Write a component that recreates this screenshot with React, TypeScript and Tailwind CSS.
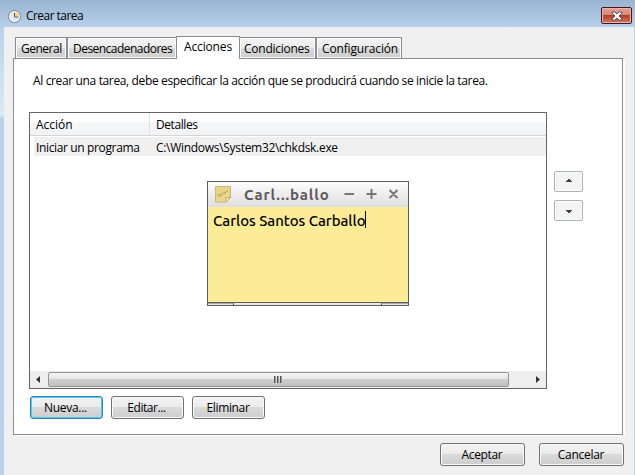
import React from "react";

const face = "bg-[linear-gradient(#f3f3f3_0%,#ebebeb_48%,#dadada_50%,#cdcdcd_100%)]";

function T({ children, w }: { children: React.ReactNode; w: string }) {
  return <span className={"block shrink-0 whitespace-pre " + w}>{children}</span>;
}

function Button({ children, size, track, focus = false }: { children: string; size: string; track: string; focus?: boolean }) {
  return (
    <button
      className={
        "flex h-[23px] items-center justify-center rounded-[3px] border " + face + " " + size + " " +
        (focus
          ? "border-[#3c7fb1] shadow-[inset_0_0_0_1px_#48cdf5]"
          : "border-[#707070] shadow-[inset_0_0_0_1px_#fafafa]")
      }
    >
      <span className={"block whitespace-pre " + track}>{children}</span>
    </button>
  );
}

function Tab({ children, cls, track }: { children: string; cls: string; track: string }) {
  return (
    <div className={"h-[21px] border border-b-0 border-[#898c95] pl-[5px] leading-[21px] shadow-[inset_0_0_0_1px_#fcfcfc] " + face + " " + cls}>
      <T w={track}>{children}</T>
    </div>
  );
}

function ArrowButton({ up }: { up: boolean }) {
  return (
    <div className="flex h-[21px] w-[29px] items-center justify-center rounded-[2px] border border-[#adb2b5] bg-[#f4f4f4] shadow-[inset_0_0_0_1px_#fcfcfc]">
      <svg width="6" height="3" viewBox="0 0 6 3" shapeRendering="crispEdges" className={up ? "mb-[2px]" : "mt-[2px]"}>
        <path d={up ? "M2 0h2v1h1v1h1v1H0V2h1V1h1z" : "M0 0h6v1H5v1H4v1H2V2H1V1H0z"} fill="#404040" />
      </svg>
    </div>
  );
}

function StickyNote() {
  return (
    <div className="absolute left-[207px] top-[181px] flex h-[125px] w-[202px] flex-col border border-[#5c5c5c] bg-[#fdec97]">
      <div className="flex h-[25px] shrink-0 items-center bg-[linear-gradient(#fdfdfd,#dedede)] font-['Ubuntu','Noto_Sans',sans-serif]">
        <svg className="ml-[7px] shrink-0" width="17" height="17" viewBox="0 0 17 17">
          <path d="M.5 .5h15v11l-4.500 4.500H.5z" fill="#e9d68a" stroke="#cdb873" />
          <path d="M11 16v-4.500h4.500z" fill="#f8edb4" stroke="#b9a35c" strokeWidth=".8" />
          <path d="M2 9.500l1.500-1.500 1 1.500 1.500-2 1.500 1 1.500-2.500 1 1.500 1-2 2-.5M3 10.500l4-1" fill="none" stroke="#b09a52" strokeWidth=".8" />
        </svg>
        <span className="ml-[12px] w-[86px] whitespace-pre text-[15px] font-bold text-[#5a5a5a] tracking-[0.87px]">Carl...ballo</span>
        <svg className="ml-[14px] shrink-0" width="56" height="13" viewBox="0 0 56 13" stroke="#777" strokeWidth="2" fill="none">
          <path d="M.5 6h9.500M22.500 6h10M27.500 1v10M45.500 2l8 8M53.500 2l-8 8" />
        </svg>
      </div>
      <div className="flex flex-1 pl-[5px] pt-[4px] font-['Ubuntu','Noto_Sans',sans-serif] text-[15px] font-medium leading-[20px] text-black">
        <span className="w-[152px] whitespace-pre tracking-[-0.06px]">Carlos Santos Carballo</span>
        <span className="h-[17px] w-px bg-black" />
      </div>
      <div className="flex h-[3px] shrink-0 border-t border-[#5c5c5c] bg-[#e8e8e8]">
        <span className="w-[26px] border-r border-t border-[#5c5c5c] border-t-[#aaa]" />
        <span className="flex-1" />
        <span className="w-[27px] border-l border-t border-[#5c5c5c] border-t-[#aaa]" />
      </div>
    </div>
  );
}

export default function App() {
  return (
    <div className="relative flex h-[475px] w-[635px] flex-col overflow-hidden bg-[#b9d1ea] font-['Open_Sans','Noto_Sans',sans-serif] text-[12px] leading-[16px] text-black">
      <header className="flex h-[27px] shrink-0 items-start bg-[linear-gradient(#99b4d1,#b7d1ea)]">
        <svg className="ml-[8px] mt-[10px]" width="14" height="14" viewBox="0 0 14 14">
          <circle cx="6.500" cy="6.500" r="6" fill="#fff" stroke="#777b80" />
          <circle cx="6.500" cy="6.500" r="4.500" fill="#dce8ee" />
          <path d="M6.500 6.500V2a4.500 4.500 0 0 1 4.500 4.500z" fill="#f7cf86" />
          <path d="M6.500 3v4h4" fill="none" stroke="#4d6478" />
        </svg>
        <div className="ml-[4px] mt-[8px]"><T w="w-[60px] tracking-[-0.55px]">Crear tarea</T></div>
        <div className="ml-auto mr-[3px] mt-[7px] flex h-[17px] w-[31px] items-center justify-center rounded-[2px] border border-[#43141e] bg-[linear-gradient(#e3a095_0%,#d88878_46%,#b53d24_50%,#d07a63_100%)] shadow-[inset_0_0_0_1px_#e9b5a9]">
          <svg width="12" height="10" viewBox="0 0 12 10">
            <path d="M1 1h3l2 2 2-2h3v1L8 5l3 3v1H8L6 7 4 9H1V8l3-3-3-3z" fill="#fff" stroke="#535666" />
          </svg>
        </div>
      </header>
      <div className="flex min-h-0 flex-1">
        <div className="w-[4px] shrink-0 bg-[linear-gradient(#b9d1ea_0px,#dce9f6_88px,#b9d1ea_91px)]" />
        <main className="flex w-[630px] shrink-0 flex-col bg-[#f0f0f0]">
          <div className="relative z-10 -mb-px flex h-[32px] items-end pl-[11px]">
            <Tab cls="w-[52px] mb-px" track="tracking-[-0.5px]">General</Tab>
            <Tab cls="w-[109px] mb-px border-r-0" track="tracking-[-0.53px]">Desencadenadores</Tab>
            <div className="h-[23px] w-[64px] border border-b-0 border-[#898c95] bg-white pl-[7px] leading-[20px]"><T w="tracking-[-0.15px]">Acciones</T></div>
            <Tab cls="w-[76px] mb-px border-l-0" track="-ml-px tracking-[-0.25px]">Condiciones</Tab>
            <Tab cls="w-[86px] mb-px" track="tracking-[-0.15px]">Configuración</Tab>
          </div>
          <section className="ml-[9px] h-[377px] w-[610px] shrink-0 border border-[#898c95] bg-white pl-[15px] shadow-[2px_1px_0_#fff]">
            <div className="pl-[4px] pt-[14px]"><T w="tracking-[-0.36px]">Al crear una tarea, debe especificar la acción que se producirá cuando se inicie la tarea.</T></div>
            <div className="mt-[23px] flex">
              <div className="flex h-[277px] w-[518px] flex-col border border-[#646464] bg-white">
                <div className="flex h-[23px] border-b border-[#d5d5d5] bg-[linear-gradient(#fff_0px,#fff_9px,#f7f8fa_9px,#f1f2f4_22px)] leading-[23px]">
                  <div className="w-[120px] border-r border-[#dfe1e4] pl-[6px]"><T w="tracking-[0px]">Acción</T></div>
                  <div className="pl-[6px]"><T w="tracking-[-0.42px]">Detalles</T></div>
                </div>
                <div className="ml-[4px] mt-[1px] flex h-[19px] bg-[#f0f0f0] leading-[21px]">
                  <div className="w-[116px] pl-[2px]"><T w="tracking-[-0.36px]">Iniciar un programa</T></div>
                  <div className="pl-[6px]"><T w="tracking-[-0.3px]">C:\Windows\System32\chkdsk.exe</T></div>
                </div>
                <div className="mt-auto flex h-[17px] items-center bg-[#eeeeee]">
                  <svg className="ml-[6px] mr-[8px]" width="4" height="7" viewBox="0 0 4 7"><path d="M4 0v7L0 3.500z" fill="#333" /></svg>
                  <div className="flex h-[15px] w-[461px] items-center justify-center gap-px rounded-[2px] border border-[#959595] bg-[linear-gradient(#f5f5f5,#e6e6e6_48%,#cfcfcf_50%,#c0c0c0)] pr-px">
                    <i className="h-[7px] w-[2px] bg-[linear-gradient(90deg,#555_50%,#999_50%)]" /><i className="h-[7px] w-[2px] bg-[linear-gradient(90deg,#555_50%,#999_50%)]" /><i className="h-[7px] w-[2px] bg-[linear-gradient(90deg,#555_50%,#999_50%)]" />
                  </div>
                  <svg className="ml-auto mr-[6px]" width="4" height="7" viewBox="0 0 4 7"><path d="M0 0v7l4-3.500z" fill="#333" /></svg>
                </div>
              </div>
              <div className="ml-[7px] mt-[59px] flex flex-col gap-[8px]"><ArrowButton up /><ArrowButton up={false} /></div>
            </div>
            <div className="ml-px mt-[7px] flex gap-[8px]">
              <Button size="w-[73px]" track="-ml-[2px] tracking-[-0.3px]" focus>Nueva...</Button>
              <Button size="w-[73px]" track="-ml-[2px] tracking-[-0.45px]">Editar...</Button>
              <Button size="w-[73px]" track="-ml-px tracking-[-0.35px]">Eliminar</Button>
            </div>
          </section>
          <footer className="mt-[8px] flex gap-[14px] pl-[436px]">
            <Button size="w-[85px]" track="-ml-px tracking-[-0.35px]">Aceptar</Button>
            <Button size="w-[85px]" track="-ml-px tracking-[-0.3px]">Cancelar</Button>
          </footer>
        </main>
      </div>
      <StickyNote />
    </div>
  );
}
